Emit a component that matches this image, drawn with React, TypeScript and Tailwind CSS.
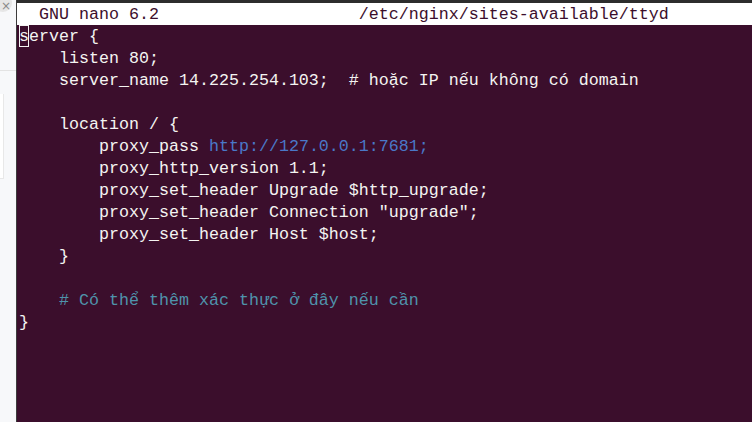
import React from 'react';

type Seg = { t: string; c?: string };

const W = 'text-[#f4f4f2]';
const URL = 'text-[#4a78c8]';
const CMT = 'text-[#4f93ab]';

const LINES: Seg[][] = [
  [{ t: 'erver {' }],
  [{ t: '    listen 80;' }],
  [{ t: '    server_name 14.225.254.103;  # hoặc IP nếu không có domain' }],
  [],
  [{ t: '    location / {' }],
  [{ t: '        proxy_pass ' }, { t: 'http://127.0.0.1:7681;', c: URL }],
  [{ t: '        proxy_http_version 1.1;' }],
  [{ t: '        proxy_set_header Upgrade $http_upgrade;' }],
  [{ t: '        proxy_set_header Connection "upgrade";' }],
  [{ t: '        proxy_set_header Host $host;' }],
  [{ t: '    }' }],
  [],
  [{ t: '    # Có thể thêm xác thực ở đây nếu cần', c: CMT }],
  [{ t: '}' }],
];

const mono = "font-['Liberation_Mono','DejaVu_Sans_Mono',monospace] text-[16.67px] leading-[22px] whitespace-pre";

export default function App() {
  return (
    <div className="w-[752px] h-[422px] flex overflow-hidden bg-[#3b0e2c]">
      {/* side strip of the window behind */}
      <div className="relative w-[17px] h-full bg-[#f7f8fa] border-r border-[#3c3c3c] flex flex-col">
        <div className="absolute -left-[6px] -top-[6px] w-[18px] h-[18px] rounded-full bg-[#e6e6e6]" />
        <span className="relative ml-[1px] -mt-[1px] text-[12px] leading-[14px] text-[#8a8a8a] font-['DejaVu_Sans',sans-serif]">×</span>
        <div className="mt-[57px] h-px bg-[#e3e3e3]" />
        <div className="mt-[23px] w-[4px] h-[85px] border-r border-b border-[#e8e8e8] bg-white" />
      </div>

      <div className="flex-1 flex flex-col">
        <div className="h-[3px] bg-[#2d2d2d]" />
        <div className={`h-[22px] bg-white text-[#3b0e2c] pl-[2px] pt-[1px] ${mono}`}>
          {'  GNU nano 6.2                    /etc/nginx/sites-available/ttyd'}
        </div>
        <div className={`pl-[2px] ${mono} ${W}`}>
          {LINES.map((segs, i) => (
            <div key={i} className="h-[22px] pt-[1px]">
              {i === 0 && (
                <span className="inline-block w-[10px] h-[22px] -mt-[1px] align-top outline outline-1 -outline-offset-1 outline-[#f4f4f2] pt-[1px]">s</span>
              )}
              {segs.map((s, j) => (
                <span key={j} className={s.c}>{s.t}</span>
              ))}
            </div>
          ))}
        </div>
      </div>
    </div>
  );
}
